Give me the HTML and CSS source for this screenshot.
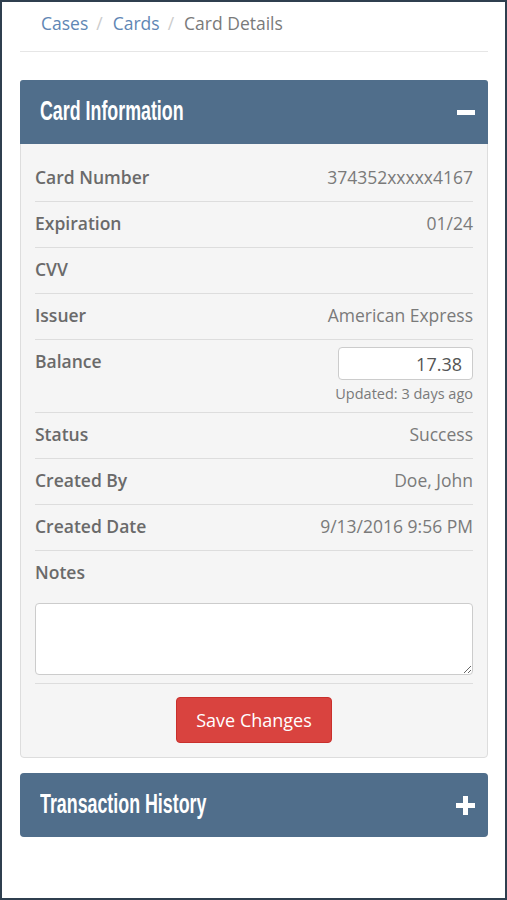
FILE: index.html
```html
<!DOCTYPE html>
<html>
<head>
    <meta charset="UTF-8">
    <title>Card Details</title>
    <link rel="stylesheet" href="styles.css">
</head>
<body>
    <div class="frame">
        <ol class="breadcrumb">
            <li><a href="#">Cases</a></li>
            <li><a href="#">Cards</a></li>
            <li class="active">Card Details</li>
        </ol>
        <hr class="divider">

        <!-- Card information panel (expanded) -->
        <div class="panel">
            <div class="panel-heading">
                <span class="panel-title">Card Information</span>
                <svg class="toggle" width="19" height="19" viewBox="0 0 19 19">
                    <rect x="1" y="7" width="18" height="5" fill="#ffffff"/>
                </svg>
            </div>
            <div class="panel-body">
                <div class="detail-row">
                    <span class="label">Card Number</span>
                    <span class="value">374352xxxxx4167</span>
                </div>
                <div class="detail-row">
                    <span class="label">Expiration</span>
                    <span class="value">01/24</span>
                </div>
                <div class="detail-row">
                    <span class="label">CVV</span>
                    <span class="value"></span>
                </div>
                <div class="detail-row">
                    <span class="label">Issuer</span>
                    <span class="value">American Express</span>
                </div>
                <div class="detail-row balance-row">
                    <span class="label">Balance</span>
                    <div class="balance">
                        <input type="text" class="balance-input" value="17.38">
                        <div class="updated">Updated: 3 days ago</div>
                    </div>
                </div>
                <div class="detail-row">
                    <span class="label">Status</span>
                    <span class="value">Success</span>
                </div>
                <div class="detail-row">
                    <span class="label">Created By</span>
                    <span class="value">Doe, John</span>
                </div>
                <div class="detail-row">
                    <span class="label">Created Date</span>
                    <span class="value">9/13/2016 9:56 PM</span>
                </div>
                <div class="notes-row">
                    <span class="label">Notes</span>
                    <textarea class="notes"></textarea>
                </div>
                <div class="actions">
                    <button type="button" class="btn-save">Save Changes</button>
                </div>
            </div>
        </div>

        <!-- Transaction history panel (collapsed) -->
        <div class="panel collapsed">
            <div class="panel-heading">
                <span class="panel-title">Transaction History</span>
                <svg class="toggle" width="19" height="19" viewBox="0 0 19 19">
                    <rect x="0" y="7" width="19" height="5" fill="#ffffff"/>
                    <rect x="7" y="0" width="5" height="19" fill="#ffffff"/>
                </svg>
            </div>
        </div>
    </div>
</body>
</html>
```

FILE: styles.css
```css
html, body {
    margin: 0;
    padding: 0;
}
body {
    font-family: "Open Sans", "Liberation Sans", sans-serif;
    background-color: #ffffff;
}
.frame {
    box-sizing: border-box;
    height: 900px;
    border: 2px solid #2f3f4f; /* dark window edge */
    padding: 0 17px 0 18px;
}

/* breadcrumb */
.breadcrumb {
    list-style: none;
    margin: 0;
    padding: 9px 21px 0;
    display: flex;
    font-size: 17.5px;
    line-height: 24px;
}
.breadcrumb li + li::before {
    content: "/";
    color: #cccccc;
    padding: 0 10px 0 8px;
}
.breadcrumb a {
    color: #6086b4;
    text-decoration: none;
}
.breadcrumb .active {
    color: #7a7a7a;
}
.divider {
    border: none;
    border-top: 1px solid #e6e6e6;
    margin: 16px 0 28px;
}

/* panels */
.panel {
    border: 1px solid #dddddd;
    border-radius: 4px;
    background-color: #f5f5f5;
    margin-bottom: 15px;
}
.panel-heading {
    background-color: #506e8b; /* slate blue header */
    border-radius: 3px 3px 0 0;
    height: 64px;
    margin: -1px -1px 0;
    padding: 0 13px 0 20px;
    display: flex;
    align-items: center;
    justify-content: space-between;
}
.collapsed .panel-heading {
    border-radius: 4px;
    margin: -1px;
}
.panel-title {
    display: inline-block;
    color: #ffffff;
    font-family: "Liberation Sans", Arial, sans-serif;
    font-weight: bold;
    font-size: 27px;
    transform: scaleX(0.66);
    transform-origin: left center;
    margin-top: -2px;
}
.toggle {
    display: block;
}
.panel-body {
    padding: 12px 14px 14px 14px;
}

/* detail rows */
.detail-row {
    display: flex;
    justify-content: space-between;
    align-items: flex-start;
    padding: 9px 0 11px;
    line-height: 25px;
    border-bottom: 1px solid #dddddd;
    font-size: 17.5px;
}
.label {
    color: #6a6a6a;
    font-weight: 600;
}
.value {
    color: #7a7a7a;
}
.balance-row {
    padding-bottom: 8px;
}
.balance {
    display: flex;
    flex-direction: column;
    align-items: flex-end;
}
.balance-input {
    box-sizing: border-box;
    width: 135px;
    height: 33px;
    margin-top: -2px;
    border: 1px solid #cccccc;
    border-radius: 4px;
    background-color: #ffffff;
    padding: 0 10px;
    text-align: right;
    font-family: "Open Sans", "Liberation Sans", sans-serif;
    font-size: 18px;
    color: #555555;
}
.updated {
    font-size: 14.5px;
    line-height: 20px;
    margin-top: 4px;
    color: #7a7a7a;
}
.notes-row {
    display: flex;
    flex-direction: column;
    padding: 9px 0 8px;
    line-height: 25px;
    border-bottom: 1px solid #dddddd;
    font-size: 17.5px;
}
.notes {
    box-sizing: border-box;
    width: 100%;
    height: 72px;
    margin-top: 18px;
    border: 1px solid #cccccc;
    border-radius: 4px;
    background-color: #ffffff;
    display: block;
}
.actions {
    display: flex;
    justify-content: center;
    padding-top: 13px;
}
.btn-save {
    width: 156px;
    height: 46px;
    background-color: #d9433f; /* red save button */
    border: 1px solid #c9302c;
    border-radius: 4px;
    color: #ffffff;
    font-family: "Open Sans", "Liberation Sans", sans-serif;
    font-size: 18px;
    cursor: pointer;
}
```
